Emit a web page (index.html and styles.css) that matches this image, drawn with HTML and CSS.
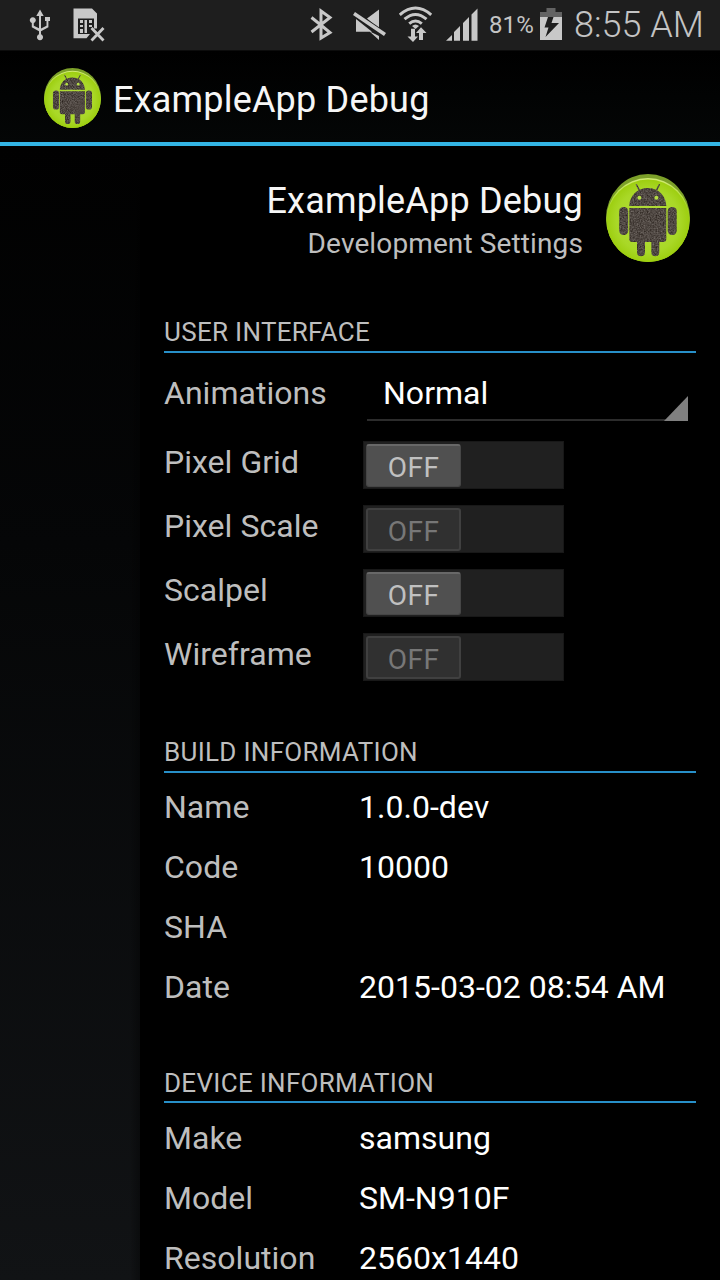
FILE: index.html
```html
<!DOCTYPE html>
<html lang="en">
<head>
<meta charset="utf-8">
<title>ExampleApp Debug</title>
<link rel="stylesheet" href="styles.css">
</head>
<body>
<svg class="defs" width="0" height="0" aria-hidden="true">
  <defs>
    <radialGradient id="lime" cx="50%" cy="50%" r="55%">
      <stop offset="0" stop-color="#b5dc42"/>
      <stop offset=".7" stop-color="#a9d827"/>
      <stop offset="1" stop-color="#98ca06"/>
    </radialGradient>
    <linearGradient id="rim" x1="0" y1="0" x2="0" y2="1">
      <stop offset="0" stop-color="#d3ec78"/>
      <stop offset=".35" stop-color="#a9d82a"/>
      <stop offset="1" stop-color="#8fc000"/>
    </linearGradient>
    <filter id="grain" x="0" y="0" width="100%" height="100%" color-interpolation-filters="sRGB">
      <feTurbulence type="fractalNoise" baseFrequency=".7" numOctaves="2" seed="4"/>
      <feColorMatrix values=".4 0 0 0 .11  .4 0 0 0 .08  .4 0 0 0 .06  0 0 0 0 1"/>
      <feComposite in2="SourceGraphic" operator="in"/>
    </filter>
    <symbol id="android" viewBox="0 0 84 88" preserveAspectRatio="none">
      <ellipse cx="42" cy="44" rx="42" ry="44" fill="#7ca029"/>
      <ellipse cx="42" cy="46" rx="41.7" ry="42" fill="url(#rim)"/>
      <ellipse cx="42" cy="46.800" rx="41.200" ry="41.200" fill="url(#lime)"/>
      <g filter="url(#grain)">
        <path d="M23.3 32C23.5 22 31 14 41.8 14S60.100 22 60.300 32ZM23.300 34H60.300V65Q60.300 68 57.300 68H53.300V78.300a4 4 0 0 1-8 0V68H39V78.300a4 4 0 0 1-8 0V68H26.300Q23.300 68 23.300 65Z"/>
        <rect x="13.200" y="33" width="9" height="28" rx="4.200"/>
        <rect x="61.700" y="33" width="9" height="28" rx="4.200"/>
        <path d="M29.600 10.600 30.800 10 34 15.800 32.600 16.600ZM54.200 10.600 53 10 49.800 15.800 51.200 16.600Z"/>
      </g>
      <circle cx="33.400" cy="23.700" r="2" fill="#b5de45"/>
      <circle cx="50.400" cy="23.700" r="2" fill="#b5de45"/>
    </symbol>
  </defs>
</svg>
<div class="screen">
  <div class="status">
    <svg class="usb" viewBox="28 0 24 50" width="24" height="50">
      <path d="M40 9.500l3.700 6.500h-2.700v12.500l5.500-2.700V21h-1.500V17h5V21h-1.600v6.200L41 31.200v3.100a3 3 0 1 1-2 0v-3.100l-7.200-4V23a3 3 0 1 1 2 0v2.700l5.200 2.600V16h-2.700z"/>
    </svg>
    <svg class="sim" viewBox="73 0 32 50" width="32" height="50">
      <path d="M73.500 8.500H92l5 5V28.500H94V18.500H78V34H90L86.500 38.300H73.500Z"/>
      <path d="M80 20h3v3h-3zM80 25h3v2h-3zM80 29h3v4h-3zM84.500 20h2.500v13h-2.500zM89 20h3v3h-3zM89 25h3v2h-3z"/>
      <path class="stroke" stroke-width="2.800" d="M91.500 28 103.500 40.500M103.500 28 91.500 40.500"/>
    </svg>
    <svg class="bluetooth" viewBox="310 0 24 50" width="24" height="50">
      <path class="stroke" stroke-width="3" d="M311.500 17.500 320.800 25 330 32.500 321 38V11L330 17.500 311.500 32"/>
    </svg>
    <svg class="mute" viewBox="353 0 34 50" width="34" height="50">
      <path d="M356 19 372 31.800H356ZM367 18.500 379 9.500V29ZM369 31 379 36V40Z"/>
      <path stroke="#1e1e1e" stroke-width="5.500" d="M352 12 387 36"/>
      <path class="stroke" stroke-width="3.600" d="M354 13.500 385 34.500"/>
    </svg>
    <svg class="wifi" viewBox="398 0 35 50" width="35" height="50">
      <path class="stroke" stroke-width="3" d="M399.800 14.800Q415.500 1.200 431.200 14.800M404.500 19.200Q415.500 9.800 426.500 19.200M409.200 23.600Q415.500 18.300 421.800 23.600"/>
      <path d="M412 26Q415.500 23 419 26L415.500 29Z"/>
      <path d="M411 28.800h4V36.500h3L413 42 407.500 36.500H411ZM419 40h4V33h3.500L421 27.200 416 33H419Z"/>
    </svg>
    <svg class="signal" viewBox="446 0 32 50" width="32" height="50">
      <path d="M446 40.800 452 35V40.800ZM454 32 460 26V40.800H454ZM463 23 469 17V40.800H463ZM471.500 14.500 477.500 8.500V40.800H471.500Z"/>
    </svg>
    <span class="percent">81%</span>
    <svg class="battery" viewBox="540 0 22 50" width="22" height="50">
      <path fill="#636363" d="M546.500 8h9v4h6.500v5h-22v-5h6.500Z"/>
      <path d="M540 17h22V40H540Z"/>
      <path fill="#1e1e1e" d="M548 17H553.500L551.500 23H559L545.500 37 548.500 27.500H544.500Z"/>
    </svg>
    <span class="clock">8:55 AM</span>
  </div>
  <header class="actionbar">
    <svg class="app-icon" width="57" height="60"><use href="#android"/></svg>
    <h1 class="title app-title">ExampleApp Debug</h1>
  </header>
  <main class="content">
    <div class="scrim"></div>
    <div class="drawer">
      <div class="profile">
        <div class="names">
          <div class="title">ExampleApp Debug</div>
          <div class="subtitle">Development Settings</div>
        </div>
        <svg class="profile-icon" width="84" height="88"><use href="#android"/></svg>
      </div>
      <section class="group ui">
        <h2 class="heading">USER INTERFACE</h2>
        <div class="row spinner-row"><span class="label">Animations</span>
          <div class="spinner"><span>Normal</span><svg class="corner" width="24" height="25" viewBox="0 0 24 25"><path d="M24 0V25H0Z" fill="#808080"/></svg></div></div>
        <div class="row toggle-row"><span class="label">Pixel Grid</span><div class="switch"><span class="thumb">OFF</span></div></div>
        <div class="row toggle-row"><span class="label">Pixel Scale</span><div class="switch disabled"><span class="thumb">OFF</span></div></div>
        <div class="row toggle-row"><span class="label">Scalpel</span><div class="switch"><span class="thumb">OFF</span></div></div>
        <div class="row toggle-row"><span class="label">Wireframe</span><div class="switch disabled"><span class="thumb">OFF</span></div></div>
      </section>
      <section class="group build">
        <h2 class="heading">BUILD INFORMATION</h2>
        <div class="row"><span class="label">Name</span><span class="value">1.0.0-dev</span></div>
        <div class="row"><span class="label">Code</span><span class="value">10000</span></div>
        <div class="row"><span class="label">SHA</span><span class="value"></span></div>
        <div class="row"><span class="label">Date</span><span class="value">2015-03-02 08:54 AM</span></div>
      </section>
      <section class="group device">
        <h2 class="heading">DEVICE INFORMATION</h2>
        <div class="row"><span class="label">Make</span><span class="value">samsung</span></div>
        <div class="row"><span class="label">Model</span><span class="value">SM-N910F</span></div>
        <div class="row"><span class="label">Resolution</span><span class="value">2560x1440</span></div>
      </section>
    </div>
  </main>
</div>
</body>
</html>
```

FILE: styles.css
```css
* { box-sizing: border-box; }
body { margin: 0; background: #000; font-family: Roboto, sans-serif; }
h1, h2 { margin: 0; font-weight: 400; }
.defs { display: block; height: 0; }
.screen { width: 720px; height: 1280px; overflow: hidden; display: flex; flex-direction: column; }

.status { height: 51px; flex: none; display: flex; background: #1e1e1e; border-bottom: 1px solid #0c0c0c; color: #c4c4c4; line-height: 50px; padding-left: 28px; white-space: nowrap; }
.status svg { flex: none; fill: #c8c8c8; }
.status .stroke { fill: none; stroke: #c8c8c8; }
.sim { margin-left: 21px; }
.bluetooth { margin-left: 205px; }
.mute { margin-left: 19px; }
.wifi { margin-left: 11px; }
.signal { margin-left: 13px; }
.percent { width: 51px; margin-left: 11px; font-size: 24px; letter-spacing: .1px; line-height: 51px; }
.clock { margin-left: 12px; font-size: 36px; font-weight: 300; line-height: 50px; }

.actionbar { height: 95px; flex: none; display: flex; align-items: center; padding: 3px 0 0 44px; background: linear-gradient(#000, #040606); border-bottom: 4px solid #33b5e5; }
.app-title { margin-left: 12px; padding-top: 4px; }
.title { font-size: 36px; line-height: 42px; letter-spacing: .2px; color: #f6f6f6; white-space: nowrap; }

.content { flex: 1; min-height: 0; display: flex; }
.scrim { width: 140px; background: linear-gradient(90deg, transparent 130px, rgba(0,0,0,.35)), linear-gradient(#010101, #050607 35%, #111315); }
.drawer { width: 580px; padding: 28px 24px 0; background: #000; }
.profile { height: 88px; display: flex; justify-content: flex-end; padding-right: 6px; }
.names { text-align: right; padding: 6px 23px 0 0; }
.subtitle { font-size: 28px; line-height: 43px; letter-spacing: .12px; color: #bebebe; }

.group { color: #bebebe; }
.heading { font-size: 26px; line-height: 35px; height: 38px; letter-spacing: .3px; border-bottom: 2px solid #278fc8; white-space: nowrap; }
.ui { padding-top: 53px; }
.build { padding-top: 46px; }
.device { padding-top: 48px; }
.row { height: 60px; display: flex; align-items: center; font-size: 32px; letter-spacing: .03px; white-space: nowrap; }
.build .heading { line-height: 34px; margin-bottom: 4px; }
.device .heading { line-height: 36px; margin-bottom: 5px; }
.label { width: 195px; flex: none; }
.value { color: #fff; }

.spinner-row { height: 80px; }
.spinner { position: relative; width: 321px; height: 55px; margin: 1px 0 0 8px; padding-left: 16px; border-bottom: 2px solid #2c2c2c; color: #fff; line-height: 55px; }
.corner { position: absolute; right: 0; bottom: -2px; }
.toggle-row { height: 64px; }
.toggle-row .label { padding-bottom: 7px; width: 199px; }
.switch { width: 201px; height: 48px; margin-bottom: 1px; background: #202020; border: 1px solid #181818; padding: 2px; }
.thumb { display: block; width: 95px; height: 43px; border-radius: 3px; background: #505050; border: 1px solid #464646; border-top: 2px solid #686868; text-align: center; font-size: 28px; letter-spacing: .5px; line-height: 43px; color: #c0c0c0; }
.disabled .thumb { background: #303030; border: 2px solid #404040; color: #777; }
```
